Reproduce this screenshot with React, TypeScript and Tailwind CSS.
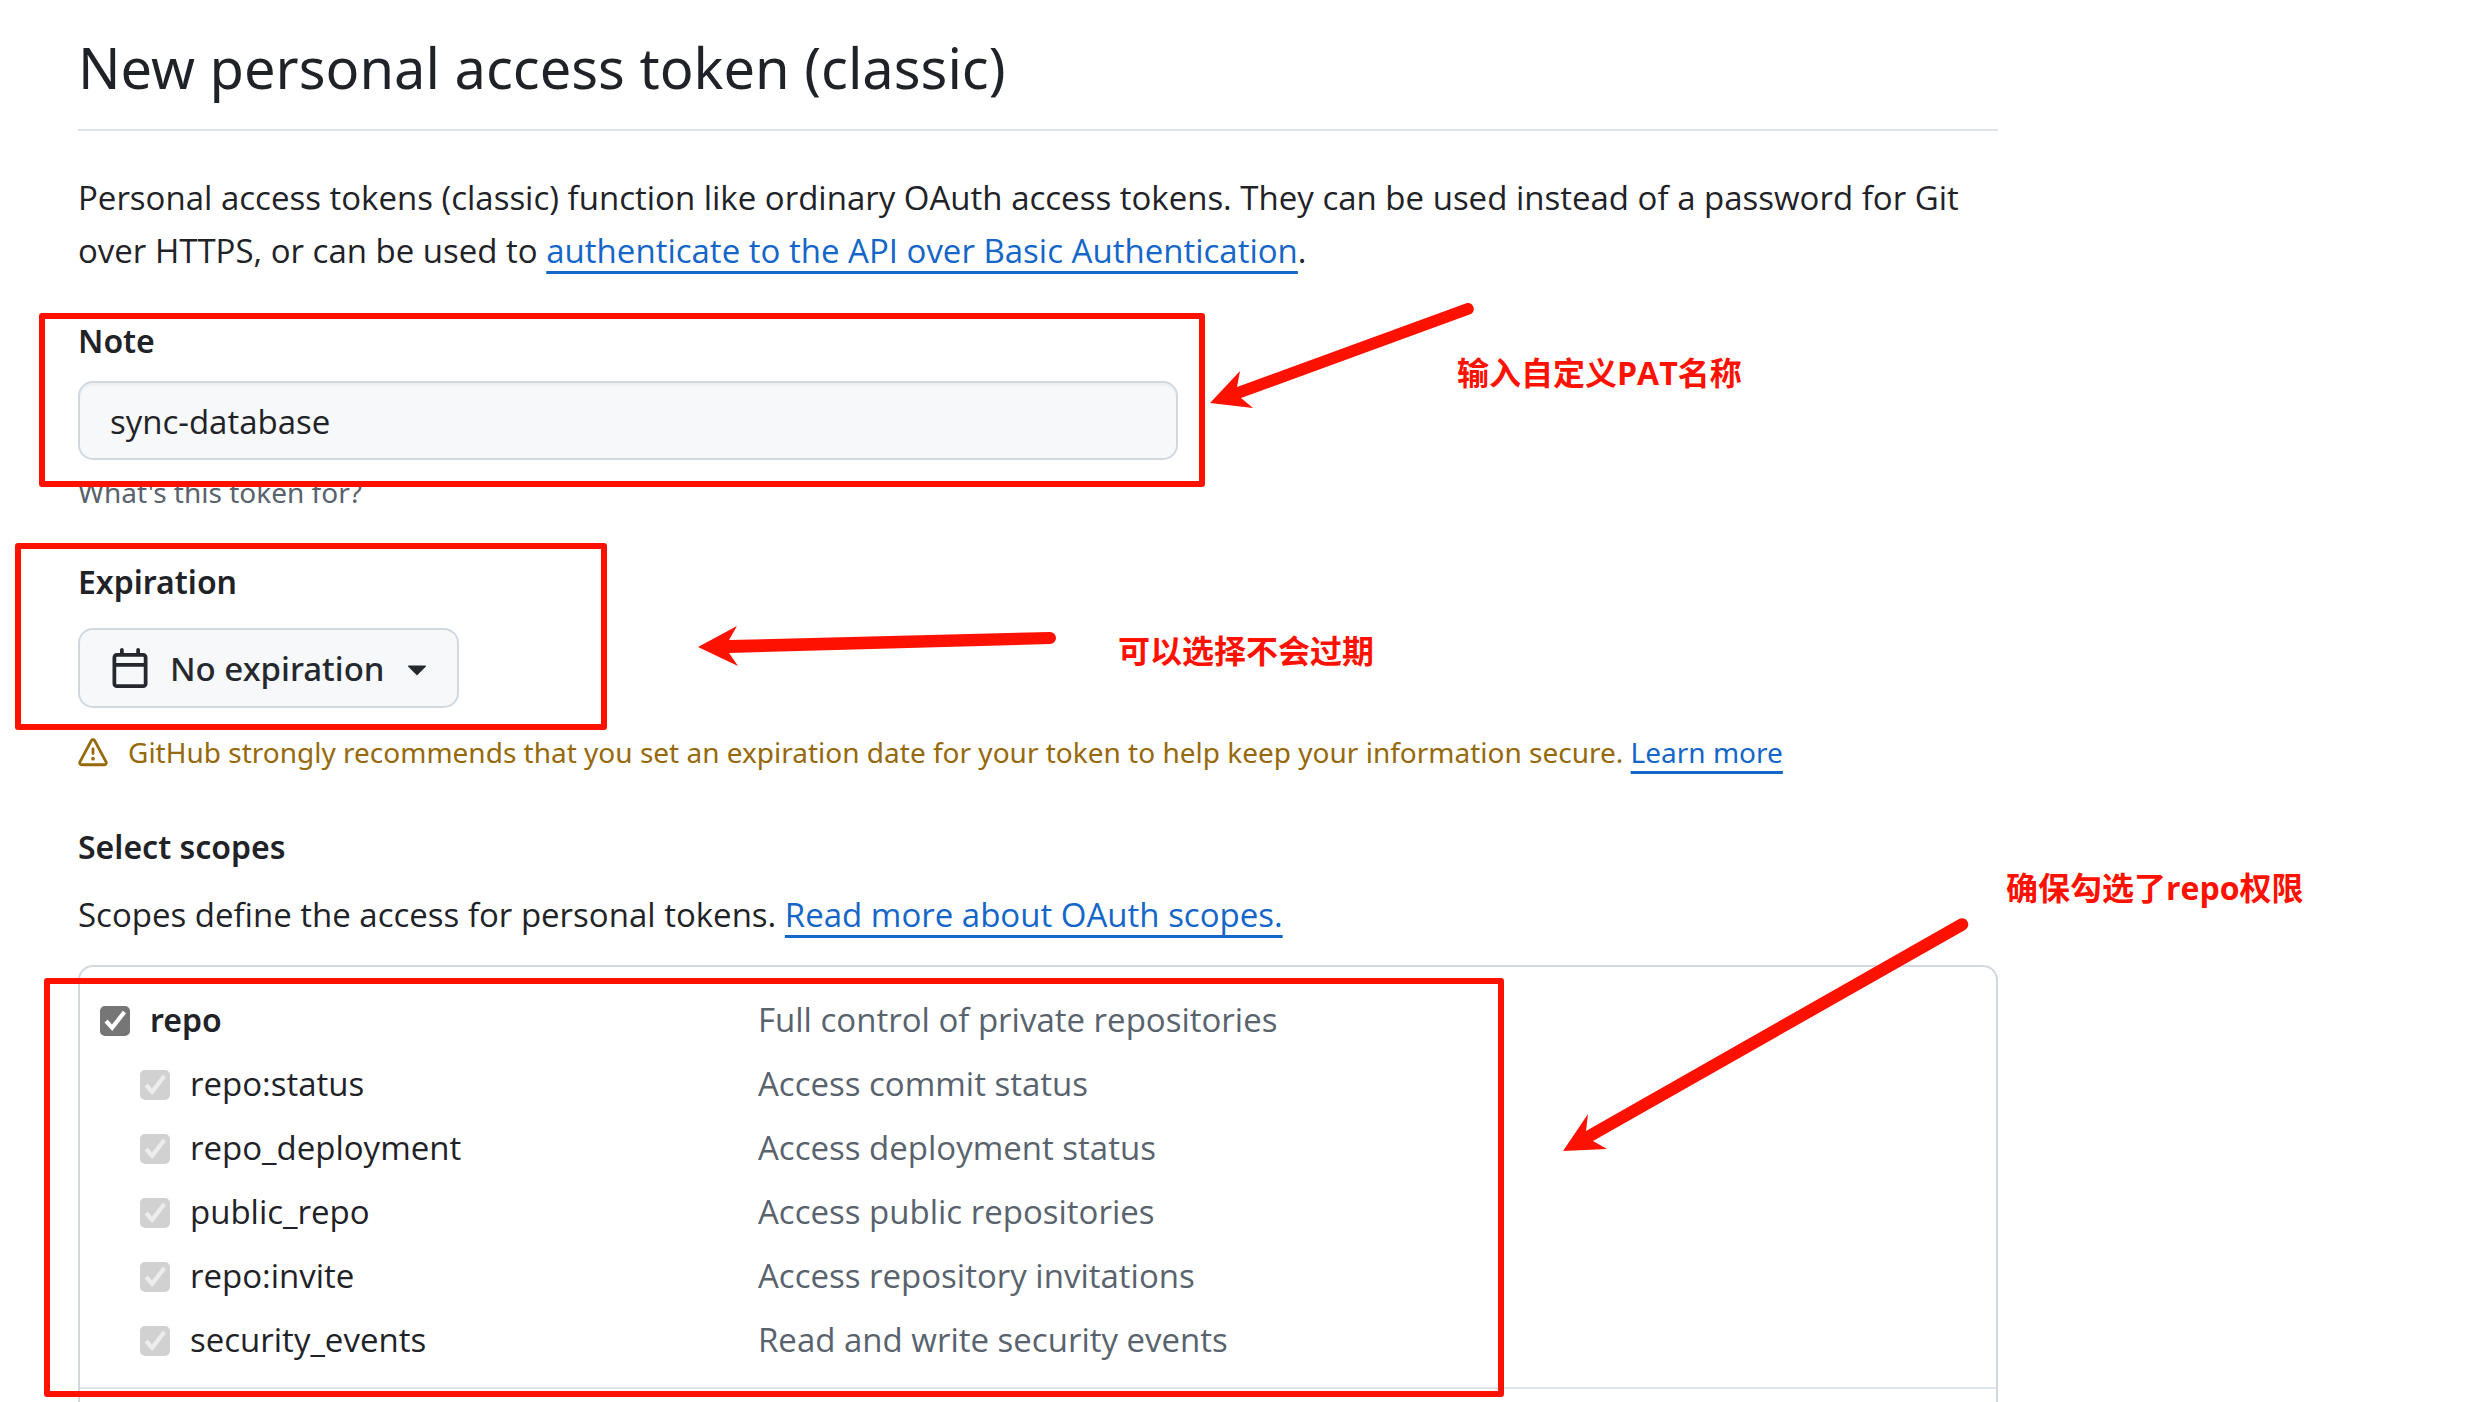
import type { ReactNode } from "react";

type Scope = { name: string; description: string };

const REPO_SCOPES: Scope[] = [
  { name: "repo:status", description: "Access commit status" },
  { name: "repo_deployment", description: "Access deployment status" },
  { name: "public_repo", description: "Access public repositories" },
  { name: "repo:invite", description: "Access repository invitations" },
  { name: "security_events", description: "Read and write security events" },
];

function TextLink({ children }: { children: ReactNode }) {
  return (
    <a
      href="#"
      className="text-[#1466c8] underline decoration-[3px] underline-offset-8 [text-decoration-skip-ink:none]"
    >
      {children}
    </a>
  );
}

function CalendarIcon() {
  return (
    <svg viewBox="0 0 16 16" className="size-10" fill="currentColor" aria-hidden="true">
      <path d="M4.75 0a.75.75 0 0 1 .75.75V2h5V.75a.75.75 0 0 1 1.5 0V2h1.25c.966 0 1.75.784 1.75 1.75v10.5A1.75 1.75 0 0 1 13.25 16H2.75A1.75 1.75 0 0 1 1 14.25V3.75C1 2.784 1.784 2 2.75 2H4V.75A.75.75 0 0 1 4.75 0ZM2.5 7.5v6.75c0 .138.112.25.25.25h10.5a.25.25 0 0 0 .25-.25V7.5Zm10.75-4H2.75a.25.25 0 0 0-.25.25V6h11V3.75a.25.25 0 0 0-.25-.25Z" />
    </svg>
  );
}

function CaretIcon() {
  return (
    <svg viewBox="0 0 16 16" className="size-10" fill="currentColor" aria-hidden="true">
      <path d="m4.427 7.427 3.396 3.396a.25.25 0 0 0 .354 0l3.396-3.396A.25.25 0 0 0 11.396 7H4.604a.25.25 0 0 0-.177.427Z" />
    </svg>
  );
}

function AlertIcon() {
  return (
    <svg viewBox="0 0 16 16" className="size-[30px] shrink-0" fill="currentColor" aria-hidden="true">
      <path d="M6.457 1.047c.659-1.234 2.427-1.234 3.086 0l6.082 11.378A1.75 1.75 0 0 1 14.082 15H1.918a1.75 1.75 0 0 1-1.543-2.575Zm1.763.707a.25.25 0 0 0-.44 0L1.698 13.132a.25.25 0 0 0 .22.368h12.164a.25.25 0 0 0 .22-.368Zm.53 3.996v2.5a.75.75 0 0 1-1.5 0v-2.5a.75.75 0 0 1 1.5 0ZM9 11a1 1 0 1 1-2 0 1 1 0 0 1 2 0Z" />
    </svg>
  );
}

function Checkbox({ id, disabled = false }: { id: string; disabled?: boolean }) {
  return (
    <span className="relative mt-1 block size-[30px] shrink-0">
      <input
        id={id}
        type="checkbox"
        defaultChecked
        disabled={disabled}
        className="peer block size-[30px] appearance-none rounded-[5px] border-2 border-[#767676] bg-white checked:bg-[#767676] disabled:border-[#d1d1d1] disabled:checked:bg-[#d1d1d1]"
      />
      <svg
        viewBox="0 0 30 30"
        className="pointer-events-none absolute inset-0 hidden size-[30px] text-white peer-checked:block peer-disabled:text-[#ededed]"
        fill="currentColor"
        aria-hidden="true"
      >
        <path d="M4.5 16.5 7.6 13.4 12 18.4 22.8 4.8 26 7.3 12.3 25Z" />
      </svg>
    </span>
  );
}

function ScopeRow({ scope, parent = false }: { scope: Scope; parent?: boolean }) {
  return (
    <li className="grid h-16 grid-cols-[658px_1fr] items-center">
      <div className={parent ? "flex items-center gap-5" : "flex items-center gap-5 pl-10"}>
        <Checkbox id={scope.name} disabled={!parent} />
        <label htmlFor={scope.name} className={parent ? "font-['Noto_Sans',sans-serif] text-[32px] font-semibold" : ""}>
          {scope.name}
        </label>
      </div>
      <span className="text-[#59636e]">{scope.description}</span>
    </li>
  );
}

function Highlight({ className }: { className: string }) {
  return <div className={`pointer-events-none absolute rounded-[3px] border-6 border-[#ff1100] ${className}`} />;
}

function Callout({ className, children }: { className: string; children: ReactNode }) {
  return (
    <p
      className={`absolute font-['Open_Sans','Noto_Sans_CJK_SC',sans-serif] text-[32px] leading-12 font-bold whitespace-nowrap text-[#ff1100] ${className}`}
    >
      {children}
    </p>
  );
}

function Annotations() {
  return (
    <>
      <Highlight className="top-[313px] left-[39px] h-[174px] w-[1166px]" />
      <Highlight className="top-[543px] left-[15px] h-[187px] w-[592px]" />
      <Highlight className="top-[978px] left-[44px] h-[419px] w-[1460px]" />

      <svg viewBox="1205 297 276 117" className="pointer-events-none absolute top-[297px] left-[1205px] h-[117px] w-[276px]" fill="#ff1100" aria-hidden="true">
        <path d="M1210 403 1240 371 1237 387 1467 303A6 6 0 0 1 1471 314L1241 398 1253 408Z" />
      </svg>
      <svg viewBox="694 621 368 51" className="pointer-events-none absolute top-[621px] left-[694px] h-[51px] w-[368px]" fill="#ff1100" aria-hidden="true">
        <path d="M698 647 737 626 729 640 1050 632A6 6 0 0 1 1050 644L729 653 738 666Z" />
      </svg>
      <svg viewBox="1558 907 416 252" className="pointer-events-none absolute top-[907px] left-[1558px] h-[252px] w-[416px]" fill="#ff1100" aria-hidden="true">
        <path d="M1563 1151 1588 1114 1586 1131 1959 919A6 6 0 0 1 1965 930L1593 1141 1607 1149Z" />
      </svg>

      <Callout className="top-[349px] left-[1457px]">输入自定义PAT名称</Callout>
      <Callout className="top-[627px] left-[1118px]">可以选择不会过期</Callout>
      <Callout className="top-[864px] left-[2006px]">确保勾选了repo权限</Callout>
    </>
  );
}

export default function App() {
  return (
    <div className="relative overflow-hidden bg-white font-['Open_Sans','Noto_Sans_CJK_SC',sans-serif] text-[33px] leading-[53px] text-[#1f2328]">
      <main className="mx-[78px] max-w-[1920px] pt-[22px]">
        <h1 className="border-b-2 border-[#dfe4e8] pb-[17px] font-['Noto_Sans',sans-serif] text-[56px] leading-[90px]">
          New personal access token (classic)
        </h1>
        <p className="mt-10">
          Personal access tokens (classic) function like ordinary OAuth access tokens. They can be used instead of a
          password for Git over HTTPS, or can be used to{" "}
          <TextLink>authenticate to the API over Basic Authentication</TextLink>.
        </p>

        <section className="mt-[37px] flex flex-col items-start">
          <label htmlFor="note" className="font-['Noto_Sans',sans-serif] text-[32px] font-semibold">
            Note
          </label>
          <input
            id="note"
            type="text"
            defaultValue="sync-database"
            className="mt-[14px] h-[79px] w-full max-w-[1100px] rounded-[15px] border-2 border-[#d1d9e0] bg-[#f6f8fa] px-[30px] pt-0.5 shadow-[inset_0_3px_0_#eef1f4] outline-none"
          />
          <p className="mt-[10px] font-['Noto_Sans',sans-serif] text-[28px] leading-[45px] text-[#59636e]">What's this token for?</p>
        </section>

        <section className="mt-10">
          <h2 id="expiration" className="font-['Noto_Sans',sans-serif] text-[32px] font-semibold">
            Expiration
          </h2>
          <button
            type="button"
            aria-haspopup="menu"
            className="mt-5 flex h-20 items-center rounded-[15px] border-2 border-[#d1d9e0] bg-[#f6f8fa] pr-5 pl-[30px] font-['Noto_Sans',sans-serif] font-medium text-[#25292e]"
          >
            <CalendarIcon />
            <span className="mr-3 ml-5">No expiration</span>
            <CaretIcon />
          </button>
          <div className="mt-[22px] flex items-center gap-5 font-['Noto_Sans',sans-serif] text-[28px] leading-[45px] text-[#96690c]">
            <AlertIcon />
            <p>
              GitHub strongly recommends that you set an expiration date for your token to help keep your information
              secure. <TextLink>Learn more</TextLink>
            </p>
          </div>
        </section>

        <section className="mt-[45px]">
          <h2 className="font-['Noto_Sans',sans-serif] text-[32px] font-semibold">Select scopes</h2>
          <p className="mt-[15px]">
            Scopes define the access for personal tokens. <TextLink>Read more about OAuth scopes.</TextLink>
          </p>
          <div className="mt-6 rounded-t-[15px] border-2 border-b-0 border-[#d1d9e0]">
            <ul className="border-b-2 border-[#dfe4e8] px-5 pt-5 pb-4">
              <ScopeRow parent scope={{ name: "repo", description: "Full control of private repositories" }} />
              {REPO_SCOPES.map((scope) => (
                <ScopeRow key={scope.name} scope={scope} />
              ))}
            </ul>
            <div className="h-[13px]" />
          </div>
        </section>
      </main>
      <Annotations />
    </div>
  );
}
